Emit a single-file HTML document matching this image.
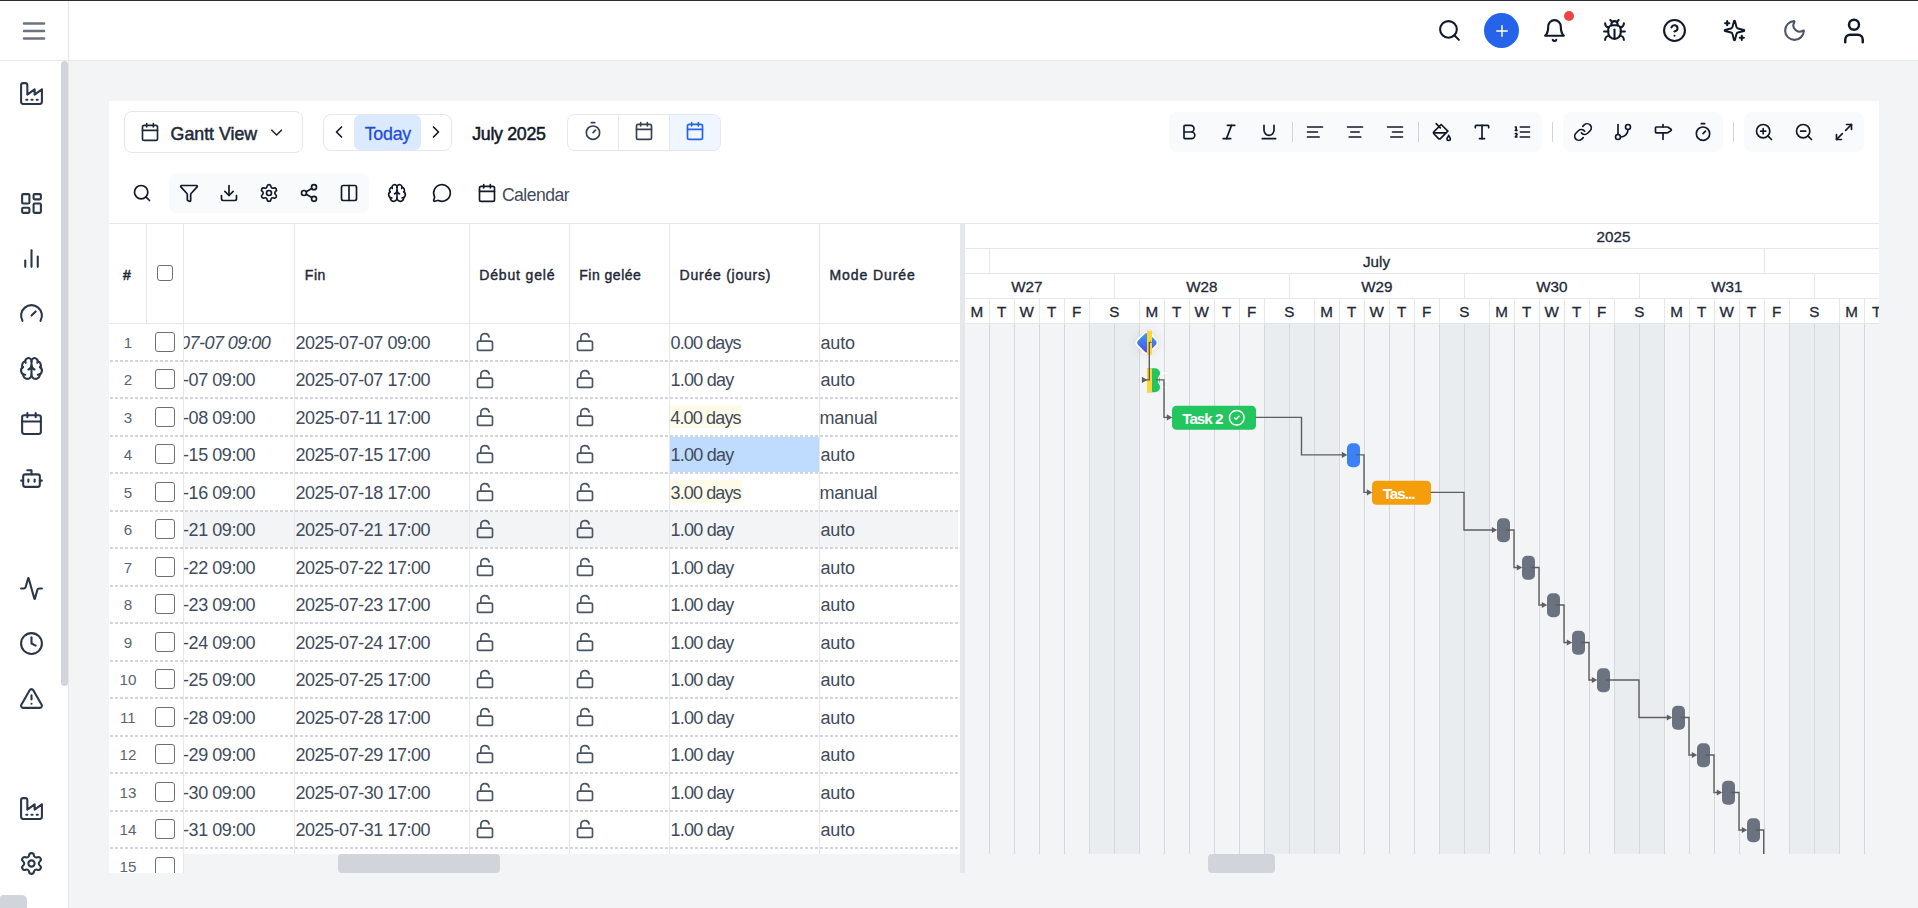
<!DOCTYPE html>
<html lang="fr"><head><meta charset="utf-8"><title>Gantt View</title>
<style>
html,body{margin:0;padding:0}
body{width:1918px;height:908px;overflow:hidden;background:#f3f4f6;position:relative;font-family:"Liberation Sans",sans-serif;}
.b{position:absolute;box-sizing:border-box}
.t{position:absolute;white-space:nowrap}
.ic{position:absolute;fill:none;stroke:currentColor;stroke-linecap:round;stroke-linejoin:round;overflow:visible}
.cb{position:absolute;box-sizing:border-box;border:1.6px solid #707070;background:#fff}
.clip{position:absolute;overflow:hidden}
</style></head><body>

<div class="b" style="left:0px;top:0px;width:1918px;height:61px;background:#fff;border-bottom:1px solid #e5e7eb"></div>
<div class="b" style="left:0px;top:0px;width:69px;height:908px;background:#fff;border-right:1px solid #e5e7eb"></div>
<div class="b" style="left:0px;top:60px;width:69px;height:1px;background:#e5e7eb"></div>
<div class="b" style="left:0px;top:0px;width:1918px;height:1px;background:#2b2f33"></div>
<div class="b" style="left:61px;top:61px;width:7px;height:625px;background:#d1d5db;border-radius:3.5px"></div>
<div class="b" style="left:0px;top:895px;width:27px;height:13px;background:#d1d5db;border-radius:3px 5px 0 0"></div>
<svg class="ic" style="left:19.00px;top:16.00px;width:30px;height:30px;color:#6b7280" viewBox="0 0 24 24" stroke-width="2" ><path d="M4 6h16"/><path d="M4 12h16"/><path d="M4 18h16"/></svg>
<svg class="ic" style="left:19.00px;top:80.80px;width:25px;height:25px;color:#2b3648" viewBox="0 0 24 24" stroke-width="2" ><path d="M2 20a2 2 0 0 0 2 2h16a2 2 0 0 0 2-2V8l-7 5V8l-7 5V4a2 2 0 0 0-2-2H4a2 2 0 0 0-2 2Z"/><path d="M17 18h1"/><path d="M12 18h1"/><path d="M7 18h1"/></svg>
<svg class="ic" style="left:19.00px;top:190.80px;width:25px;height:25px;color:#2b3648" viewBox="0 0 24 24" stroke-width="2" ><rect width="7" height="9" x="3" y="3" rx="1"/><rect width="7" height="5" x="14" y="3" rx="1"/><rect width="7" height="9" x="14" y="12" rx="1"/><rect width="7" height="5" x="3" y="16" rx="1"/></svg>
<svg class="ic" style="left:19.00px;top:245.80px;width:25px;height:25px;color:#2b3648" viewBox="0 0 24 24" stroke-width="2" ><path d="M18 20V10"/><path d="M12 20V4"/><path d="M6 20v-6"/></svg>
<svg class="ic" style="left:19.00px;top:301.10px;width:25px;height:25px;color:#2b3648" viewBox="0 0 24 24" stroke-width="2" ><path d="m12 14 4-4"/><path d="M3.34 19a10 10 0 1 1 17.32 0"/></svg>
<svg class="ic" style="left:19.00px;top:355.80px;width:25px;height:25px;color:#2b3648" viewBox="0 0 24 24" stroke-width="2" ><path d="M12 18V5"/><path d="M15 13a4.17 4.17 0 0 1-3-4 4.17 4.17 0 0 1-3 4"/><path d="M17.598 6.5A3 3 0 1 0 12 5a3 3 0 1 0-5.598 1.5"/><path d="M17.997 5.125a4 4 0 0 1 2.526 5.77"/><path d="M18 18a4 4 0 0 0 2-7.464"/><path d="M19.967 17.483A4 4 0 1 1 12 18a4 4 0 1 1-7.967-.517"/><path d="M6 18a4 4 0 0 1-2-7.464"/><path d="M6.003 5.125a4 4 0 0 0-2.526 5.77"/></svg>
<svg class="ic" style="left:19.00px;top:410.80px;width:25px;height:25px;color:#2b3648" viewBox="0 0 24 24" stroke-width="2" ><path d="M8 2v4"/><path d="M16 2v4"/><rect width="18" height="18" x="3" y="4" rx="2"/><path d="M3 10h18"/></svg>
<svg class="ic" style="left:19.00px;top:465.80px;width:25px;height:25px;color:#2b3648" viewBox="0 0 24 24" stroke-width="2" ><path d="M12 8V4H8"/><rect width="16" height="12" x="4" y="8" rx="2"/><path d="M2 14h2"/><path d="M20 14h2"/><path d="M15 13v2"/><path d="M9 13v2"/></svg>
<svg class="ic" style="left:19.00px;top:575.80px;width:25px;height:25px;color:#2b3648" viewBox="0 0 24 24" stroke-width="2" ><path d="M22 12h-2.48a2 2 0 0 0-1.93 1.46l-2.35 8.36a.25.25 0 0 1-.48 0L9.24 2.18a.25.25 0 0 0-.48 0l-2.35 8.36A2 2 0 0 1 4.49 12H2"/></svg>
<svg class="ic" style="left:19.00px;top:630.80px;width:25px;height:25px;color:#2b3648" viewBox="0 0 24 24" stroke-width="2" ><path d="M12 6v6l4 2"/><circle cx="12" cy="12" r="10"/></svg>
<svg class="ic" style="left:19.00px;top:685.80px;width:25px;height:25px;color:#2b3648" viewBox="0 0 24 24" stroke-width="2" ><path d="m21.73 18-8-14a2 2 0 0 0-3.48 0l-8 14A2 2 0 0 0 4 21h16a2 2 0 0 0 1.73-3"/><path d="M12 9v4"/><path d="M12 17h.01"/></svg>
<svg class="ic" style="left:19.00px;top:795.80px;width:25px;height:25px;color:#2b3648" viewBox="0 0 24 24" stroke-width="2" ><path d="M2 20a2 2 0 0 0 2 2h16a2 2 0 0 0 2-2V8l-7 5V8l-7 5V4a2 2 0 0 0-2-2H4a2 2 0 0 0-2 2Z"/><path d="M17 18h1"/><path d="M12 18h1"/><path d="M7 18h1"/></svg>
<svg class="ic" style="left:19.00px;top:850.80px;width:25px;height:25px;color:#2b3648" viewBox="0 0 24 24" stroke-width="2" ><path d="M9.671 4.136a2.34 2.34 0 0 1 4.659 0 2.34 2.34 0 0 0 3.319 1.915 2.34 2.34 0 0 1 2.33 4.033 2.34 2.34 0 0 0 0 3.831 2.34 2.34 0 0 1-2.33 4.033 2.34 2.34 0 0 0-3.319 1.915 2.34 2.34 0 0 1-4.659 0 2.34 2.34 0 0 0-3.32-1.915 2.34 2.34 0 0 1-2.33-4.033 2.34 2.34 0 0 0 0-3.831A2.34 2.34 0 0 1 6.35 6.051a2.34 2.34 0 0 0 3.319-1.915"/><circle cx="12" cy="12" r="3"/></svg>
<svg class="ic" style="left:1437.00px;top:17.60px;width:25px;height:25px;color:#111827" viewBox="0 0 24 24" stroke-width="2" ><path d="m21 21-4.34-4.34"/><circle cx="11" cy="11" r="8"/></svg>
<div class="b" style="left:1484px;top:13px;width:35px;height:35px;background:#2563eb;border-radius:50%"></div>
<svg class="ic" style="left:1492.50px;top:21.50px;width:18px;height:18px;color:#fff" viewBox="0 0 24 24" stroke-width="2" ><path d="M5 12h14"/><path d="M12 5v14"/></svg>
<svg class="ic" style="left:1542.00px;top:17.60px;width:25px;height:25px;color:#111827" viewBox="0 0 24 24" stroke-width="2" ><path d="M6 8a6 6 0 0 1 12 0c0 7 3 9 3 9H3s3-2 3-9"/><path d="M10.3 21a1.94 1.94 0 0 0 3.4 0"/></svg>
<div class="b" style="left:1564px;top:11px;width:10px;height:10px;background:#ef4444;border-radius:50%"></div>
<svg class="ic" style="left:1602.00px;top:17.60px;width:25px;height:25px;color:#111827" viewBox="0 0 24 24" stroke-width="2" ><path d="M12 20v-9"/><path d="M14 7a4 4 0 0 1 4 4v3a6 6 0 0 1-12 0v-3a4 4 0 0 1 4-4z"/><path d="M14.12 3.88 16 2"/><path d="M21 21a4 4 0 0 0-3.81-4"/><path d="M21 5a4 4 0 0 1-3.55 3.97"/><path d="M22 13h-4"/><path d="M3 21a4 4 0 0 1 3.81-4"/><path d="M3 5a4 4 0 0 0 3.55 3.97"/><path d="M6 13H2"/><path d="m8 2 1.88 1.88"/><path d="M9 7.13V6a3 3 0 1 1 6 0v1.13"/></svg>
<svg class="ic" style="left:1662.00px;top:17.60px;width:25px;height:25px;color:#111827" viewBox="0 0 24 24" stroke-width="2" ><circle cx="12" cy="12" r="10"/><path d="M9.09 9a3 3 0 0 1 5.83 1c0 2-3 3-3 3"/><path d="M12 17h.01"/></svg>
<svg class="ic" style="left:1722.00px;top:17.60px;width:25px;height:25px;color:#111827" viewBox="0 0 24 24" stroke-width="2" ><path d="M9.937 15.5A2 2 0 0 0 8.5 14.063l-6.135-1.582a.5.5 0 0 1 0-.962L8.5 9.936A2 2 0 0 0 9.937 8.5l1.582-6.135a.5.5 0 0 1 .963 0L14.063 8.5A2 2 0 0 0 15.5 9.937l6.135 1.581a.5.5 0 0 1 0 .964L15.5 14.063a2 2 0 0 0-1.437 1.437l-1.582 6.135a.5.5 0 0 1-.963 0z" transform="translate(0.7 0.7) scale(0.94)"/><path d="M5 3v4"/><path d="M7 5H3"/><path d="M19 17v4"/><path d="M21 19h-4"/></svg>
<svg class="ic" style="left:1782.00px;top:17.60px;width:25px;height:25px;color:#4b5563" viewBox="0 0 24 24" stroke-width="2" ><path d="M20.985 12.486a9 9 0 1 1-9.473-9.472c.405-.022.617.46.402.803a6 6 0 0 0 8.268 8.268c.344-.215.825-.004.803.401"/></svg>
<svg class="ic" style="left:1839.00px;top:15.90px;width:30px;height:30px;color:#111827" viewBox="0 0 24 24" stroke-width="2" ><path d="M19 21v-2a4 4 0 0 0-4-4H9a4 4 0 0 0-4 4v2"/><circle cx="12" cy="7" r="4"/></svg>
<div class="b" style="left:109px;top:101px;width:1770px;height:772px;background:#fff"></div>
<div class="b" style="left:124px;top:111px;width:179px;height:42px;border:1px solid #e5e7eb;border-radius:8px;background:#fff"></div>
<svg class="ic" style="left:140.00px;top:122.00px;width:20px;height:20px;color:#1f2937" viewBox="0 0 24 24" stroke-width="2" ><path d="M8 2v4"/><path d="M16 2v4"/><rect width="18" height="18" x="3" y="4" rx="2"/><path d="M3 10h18"/></svg>
<div class="t " style="left:170.60px;letter-spacing:-0.012px;top:124px;font-size:17.8px;line-height:20px;font-weight:400;color:#1f2937;-webkit-text-stroke:0.5px #1f2937;">Gantt View</div>
<svg class="ic" style="left:267.20px;top:122.80px;width:19.2px;height:19.2px;color:#1f2937" viewBox="0 0 24 24" stroke-width="2" ><path d="m6 9 6 6 6-6"/></svg>
<div class="b" style="left:323px;top:114px;width:129px;height:37px;border:1px solid #e5e7eb;border-radius:8px;background:#fff"></div>
<div class="b" style="left:354px;top:115px;width:67px;height:35px;background:#dbeafe;border-radius:6px"></div>
<svg class="ic" style="left:329.00px;top:122.20px;width:20px;height:20px;color:#111827" viewBox="0 0 24 24" stroke-width="2" ><path d="m15 18-6-6 6-6"/></svg>
<svg class="ic" style="left:426.00px;top:122.20px;width:20px;height:20px;color:#111827" viewBox="0 0 24 24" stroke-width="2" ><path d="m9 18 6-6-6-6"/></svg>
<div class="t " style="left:364.70px;letter-spacing:-0.239px;top:124px;font-size:17.8px;line-height:20px;font-weight:400;color:#1d4ed8;-webkit-text-stroke:0.3px #1d4ed8;">Today</div>
<div class="t " style="left:472.30px;letter-spacing:-0.316px;top:124px;font-size:17.8px;line-height:20px;font-weight:400;color:#111827;-webkit-text-stroke:0.5px #111827;">July 2025</div>
<div class="b" style="left:567px;top:114px;width:154px;height:37px;border:1px solid #e5e7eb;border-radius:8px;background:#fff;overflow:hidden"></div>
<div class="b" style="left:670px;top:115px;width:50px;height:35px;background:#eff6ff;border-radius:0 7px 7px 0"></div>
<div class="b" style="left:618px;top:115px;width:1px;height:35px;background:#e5e7eb"></div>
<div class="b" style="left:669px;top:115px;width:1px;height:35px;background:#e5e7eb"></div>
<svg class="ic" style="left:583.00px;top:121.40px;width:20px;height:20px;color:#374151" viewBox="0 0 24 24" stroke-width="2" ><line x1="10" x2="14" y1="2" y2="2"/><line x1="12" x2="15" y1="14" y2="11"/><circle cx="12" cy="14" r="8"/></svg>
<svg class="ic" style="left:634.00px;top:121.40px;width:20px;height:20px;color:#374151" viewBox="0 0 24 24" stroke-width="2" ><path d="M8 2v4"/><path d="M16 2v4"/><rect width="18" height="18" x="3" y="4" rx="2"/><path d="M3 10h18"/></svg>
<svg class="ic" style="left:685.00px;top:121.40px;width:20px;height:20px;color:#2563eb" viewBox="0 0 24 24" stroke-width="2" ><path d="M8 2v4"/><path d="M16 2v4"/><rect width="18" height="18" x="3" y="4" rx="2"/><path d="M3 10h18"/></svg>
<div class="b" style="left:1169px;top:112px;width:373px;height:40px;background:#f8fafc;border-radius:8px"></div>
<div class="b" style="left:1563px;top:112px;width:160px;height:40px;background:#f8fafc;border-radius:8px"></div>
<div class="b" style="left:1744px;top:112px;width:120px;height:40px;background:#f8fafc;border-radius:8px"></div>
<div class="b" style="left:1292px;top:122px;width:1px;height:20px;background:#d1d5db"></div>
<div class="b" style="left:1418px;top:122px;width:1px;height:20px;background:#d1d5db"></div>
<div class="b" style="left:1552.2px;top:122px;width:1.25px;height:20px;background:#d1d5db"></div>
<div class="b" style="left:1733.2px;top:122px;width:1.25px;height:20px;background:#d1d5db"></div>
<svg class="ic" style="left:1179.00px;top:122.00px;width:20px;height:20px;color:#111827" viewBox="0 0 24 24" stroke-width="2" ><path d="M6 12h9a4 4 0 0 1 0 8H7a1 1 0 0 1-1-1V5a1 1 0 0 1 1-1h7a4 4 0 0 1 0 8"/></svg>
<svg class="ic" style="left:1219.00px;top:122.00px;width:20px;height:20px;color:#111827" viewBox="0 0 24 24" stroke-width="2" ><line x1="19" x2="10" y1="4" y2="4"/><line x1="14" x2="5" y1="20" y2="20"/><line x1="15" x2="9" y1="4" y2="20"/></svg>
<svg class="ic" style="left:1259.00px;top:122.00px;width:20px;height:20px;color:#111827" viewBox="0 0 24 24" stroke-width="2" ><path d="M6 4v6a6 6 0 0 0 12 0V4"/><line x1="4" x2="20" y1="20" y2="20"/></svg>
<svg class="ic" style="left:1305.00px;top:122.00px;width:20px;height:20px;color:#111827" viewBox="0 0 24 24" stroke-width="2" ><path d="M21 6H3"/><path d="M15 12H3"/><path d="M17 18H3"/></svg>
<svg class="ic" style="left:1345.00px;top:122.00px;width:20px;height:20px;color:#111827" viewBox="0 0 24 24" stroke-width="2" ><path d="M21 6H3"/><path d="M17 12H7"/><path d="M19 18H5"/></svg>
<svg class="ic" style="left:1385.00px;top:122.00px;width:20px;height:20px;color:#111827" viewBox="0 0 24 24" stroke-width="2" ><path d="M21 6H3"/><path d="M21 12H9"/><path d="M21 18H7"/></svg>
<svg class="ic" style="left:1431.50px;top:122.00px;width:20px;height:20px;color:#111827" viewBox="0 0 24 24" stroke-width="2" ><path d="m19 11-8-8-8.6 8.6a2 2 0 0 0 0 2.8l5.2 5.2c.8.8 2 .8 2.8 0L19 11Z"/><path d="m5 2 5 5"/><path d="M2 13h15"/><path d="M22 20a2 2 0 1 1-4 0c0-1.6 1.7-2.4 2-4 .3 1.6 2 2.400 2 4Z"/></svg>
<svg class="ic" style="left:1472.00px;top:122.00px;width:20px;height:20px;color:#111827" viewBox="0 0 24 24" stroke-width="2" ><path d="M12 4v16"/><path d="M4 7V5a1 1 0 0 1 1-1h14a1 1 0 0 1 1 1v2"/><path d="M9 20h6"/></svg>
<svg class="ic" style="left:1512.00px;top:122.00px;width:20px;height:20px;color:#111827" viewBox="0 0 24 24" stroke-width="2" ><line x1="10" x2="21" y1="6" y2="6"/><line x1="10" x2="21" y1="12" y2="12"/><line x1="10" x2="21" y1="18" y2="18"/><path d="M4 6h1v4"/><path d="M4 10h2"/><path d="M6 18H4c0-1 2-2 2-3s-1-1.5-2-1"/></svg>
<svg class="ic" style="left:1573.00px;top:122.00px;width:20px;height:20px;color:#111827" viewBox="0 0 24 24" stroke-width="2" ><path d="M10 13a5 5 0 0 0 7.54.54l3-3a5 5 0 0 0-7.07-7.07l-1.72 1.71"/><path d="M14 11a5 5 0 0 0-7.54-.54l-3 3a5 5 0 0 0 7.07 7.07l1.71-1.71"/></svg>
<svg class="ic" style="left:1613.00px;top:122.00px;width:20px;height:20px;color:#111827" viewBox="0 0 24 24" stroke-width="2" ><line x1="6" x2="6" y1="3" y2="15"/><circle cx="18" cy="6" r="3"/><circle cx="6" cy="18" r="3"/><path d="M18 9a9 9 0 0 1-9 9"/></svg>
<svg class="ic" style="left:1653.00px;top:122.00px;width:20px;height:20px;color:#111827" viewBox="0 0 24 24" stroke-width="2" ><path d="M12 13v8"/><path d="M12 3v3"/><path d="M4 6a1 1 0 0 0-1 1v5a1 1 0 0 0 1 1h13a2 2 0 0 0 1.152-.365l3.424-2.317a1 1 0 0 0 0-1.635l-3.424-2.318A2 2 0 0 0 17 6z"/></svg>
<svg class="ic" style="left:1693.00px;top:122.00px;width:20px;height:20px;color:#111827" viewBox="0 0 24 24" stroke-width="2" ><line x1="10" x2="14" y1="2" y2="2"/><line x1="12" x2="15" y1="14" y2="11"/><circle cx="12" cy="14" r="8"/></svg>
<svg class="ic" style="left:1754.00px;top:122.00px;width:20px;height:20px;color:#111827" viewBox="0 0 24 24" stroke-width="2" ><circle cx="11" cy="11" r="8"/><line x1="21" x2="16.65" y1="21" y2="16.65"/><line x1="11" x2="11" y1="8" y2="14"/><line x1="8" x2="14" y1="11" y2="11"/></svg>
<svg class="ic" style="left:1794.00px;top:122.00px;width:20px;height:20px;color:#111827" viewBox="0 0 24 24" stroke-width="2" ><circle cx="11" cy="11" r="8"/><line x1="21" x2="16.65" y1="21" y2="16.65"/><line x1="8" x2="14" y1="11" y2="11"/></svg>
<svg class="ic" style="left:1834.00px;top:122.00px;width:20px;height:20px;color:#111827" viewBox="0 0 24 24" stroke-width="2" ><path d="M15 3h6v6"/><path d="m21 3-7 7"/><path d="m3 21 7-7"/><path d="M9 21H3v-6"/></svg>
<svg class="ic" style="left:132.00px;top:183.00px;width:20px;height:20px;color:#111827" viewBox="0 0 24 24" stroke-width="2" ><path d="m21 21-4.34-4.34"/><circle cx="11" cy="11" r="8"/></svg>
<div class="b" style="left:169px;top:173px;width:200px;height:40px;background:#f8fafc;border-radius:8px"></div>
<svg class="ic" style="left:179.00px;top:183.00px;width:20px;height:20px;color:#111827" viewBox="0 0 24 24" stroke-width="2" ><path d="M10 20a1 1 0 0 0 .553.895l2 1A1 1 0 0 0 14 21v-7a2 2 0 0 1 .517-1.341L21.74 4.67A1 1 0 0 0 21 3H3a1 1 0 0 0-.742 1.67l7.225 7.989A2 2 0 0 1 10 14z"/></svg>
<svg class="ic" style="left:219.00px;top:183.00px;width:20px;height:20px;color:#111827" viewBox="0 0 24 24" stroke-width="2" ><path d="M12 15V3"/><path d="M21 15v4a2 2 0 0 1-2 2H5a2 2 0 0 1-2-2v-4"/><path d="m7 10 5 5 5-5"/></svg>
<svg class="ic" style="left:259.00px;top:183.00px;width:20px;height:20px;color:#111827" viewBox="0 0 24 24" stroke-width="2" ><path d="M9.671 4.136a2.34 2.34 0 0 1 4.659 0 2.34 2.34 0 0 0 3.319 1.915 2.34 2.34 0 0 1 2.33 4.033 2.34 2.34 0 0 0 0 3.831 2.34 2.34 0 0 1-2.33 4.033 2.34 2.34 0 0 0-3.319 1.915 2.34 2.34 0 0 1-4.659 0 2.34 2.34 0 0 0-3.32-1.915 2.34 2.34 0 0 1-2.33-4.033 2.34 2.34 0 0 0 0-3.831A2.34 2.34 0 0 1 6.35 6.051a2.34 2.34 0 0 0 3.319-1.915"/><circle cx="12" cy="12" r="3"/></svg>
<svg class="ic" style="left:299.00px;top:183.00px;width:20px;height:20px;color:#111827" viewBox="0 0 24 24" stroke-width="2" ><circle cx="18" cy="5" r="3"/><circle cx="6" cy="12" r="3"/><circle cx="18" cy="19" r="3"/><line x1="8.59" x2="15.42" y1="13.51" y2="17.49"/><line x1="15.41" x2="8.59" y1="6.51" y2="10.49"/></svg>
<svg class="ic" style="left:339.00px;top:183.00px;width:20px;height:20px;color:#111827" viewBox="0 0 24 24" stroke-width="2" ><rect width="18" height="18" x="3" y="3" rx="2"/><path d="M12 3v18"/></svg>
<svg class="ic" style="left:387.00px;top:183.00px;width:20px;height:20px;color:#111827" viewBox="0 0 24 24" stroke-width="2" ><path d="M12 18V5"/><path d="M15 13a4.17 4.17 0 0 1-3-4 4.17 4.17 0 0 1-3 4"/><path d="M17.598 6.5A3 3 0 1 0 12 5a3 3 0 1 0-5.598 1.5"/><path d="M17.997 5.125a4 4 0 0 1 2.526 5.77"/><path d="M18 18a4 4 0 0 0 2-7.464"/><path d="M19.967 17.483A4 4 0 1 1 12 18a4 4 0 1 1-7.967-.517"/><path d="M6 18a4 4 0 0 1-2-7.464"/><path d="M6.003 5.125a4 4 0 0 0-2.526 5.77"/></svg>
<svg class="ic" style="left:431.50px;top:183.00px;width:20px;height:20px;color:#111827" viewBox="0 0 24 24" stroke-width="2" ><path d="M2.992 16.342a2 2 0 0 1 .094 1.167l-1.065 3.29a1 1 0 0 0 1.236 1.168l3.413-.998a2 2 0 0 1 1.099.092 10 10 0 1 0-4.777-4.719"/></svg>
<svg class="ic" style="left:477.00px;top:183.00px;width:20px;height:20px;color:#111827" viewBox="0 0 24 24" stroke-width="2" ><path d="M8 2v4"/><path d="M16 2v4"/><rect width="18" height="18" x="3" y="4" rx="2"/><path d="M3 10h18"/></svg>
<div class="t " style="left:501.90px;letter-spacing:-0.520px;top:185px;font-size:17.6px;line-height:20px;font-weight:400;color:#424c5c;">Calendar</div>
<div class="b" style="left:109px;top:223px;width:1770px;height:1px;background:#e5e7eb"></div>
<div class="b" style="left:109px;top:323px;width:851px;height:1px;background:#e5e7eb"></div>
<div class="b" style="left:184px;top:512px;width:774px;height:35px;background:#f3f4f6"></div>
<div class="b" style="left:670px;top:437px;width:149px;height:34.5px;background:#bfdbfe"></div>
<div class="b" style="left:670px;top:405px;width:72px;height:23px;background:#fefce8"></div>
<div class="b" style="left:670px;top:480px;width:72px;height:23px;background:#fefce8"></div>
<div class="b" style="left:146px;top:224px;width:1px;height:99px;background:#e5e7eb"></div>
<div class="b" style="left:183px;top:224px;width:1px;height:630px;background:#e5e7eb"></div>
<div class="b" style="left:294px;top:224px;width:1px;height:630px;background:#e5e7eb"></div>
<div class="b" style="left:469px;top:224px;width:1px;height:630px;background:#e5e7eb"></div>
<div class="b" style="left:569px;top:224px;width:1px;height:630px;background:#e5e7eb"></div>
<div class="b" style="left:669px;top:224px;width:1px;height:630px;background:#e5e7eb"></div>
<div class="b" style="left:819px;top:224px;width:1px;height:630px;background:#e5e7eb"></div>
<svg style="position:absolute;left:0;top:0" width="960" height="860" viewBox="0 0 960 860" fill="none" stroke="#d2d6dc" stroke-width="2" stroke-dasharray="3 2"><line x1="110" x2="958" y1="361.000" y2="361.000"/><line x1="110" x2="958" y1="398.000" y2="398.000"/><line x1="110" x2="958" y1="436.000" y2="436.000"/><line x1="110" x2="958" y1="473.000" y2="473.000"/><line x1="110" x2="958" y1="511.000" y2="511.000"/><line x1="110" x2="958" y1="548.000" y2="548.000"/><line x1="110" x2="958" y1="586.000" y2="586.000"/><line x1="110" x2="958" y1="623.000" y2="623.000"/><line x1="110" x2="958" y1="661.000" y2="661.000"/><line x1="110" x2="958" y1="698.000" y2="698.000"/><line x1="110" x2="958" y1="736.000" y2="736.000"/><line x1="110" x2="958" y1="773.000" y2="773.000"/><line x1="110" x2="958" y1="811.000" y2="811.000"/><line x1="110" x2="958" y1="848.000" y2="848.000"/></svg>
<div class="t " style="left:122.90px;letter-spacing:0.000px;top:267px;font-size:14px;line-height:16px;font-weight:400;color:#1f2937;-webkit-text-stroke:0.5px #1f2937;">#</div>
<div class="cb" style="left:156.5px;top:265px;width:16px;height:16px;border-radius:3px"></div>
<div class="t " style="left:304.80px;letter-spacing:0.569px;top:267px;font-size:14px;line-height:16px;font-weight:400;color:#1f2937;-webkit-text-stroke:0.42px #1f2937;">Fin</div>
<div class="t " style="left:479.30px;letter-spacing:0.830px;top:267px;font-size:14px;line-height:16px;font-weight:400;color:#1f2937;-webkit-text-stroke:0.42px #1f2937;">Début gelé</div>
<div class="t " style="left:579.30px;letter-spacing:0.487px;top:267px;font-size:14px;line-height:16px;font-weight:400;color:#1f2937;-webkit-text-stroke:0.42px #1f2937;">Fin gelée</div>
<div class="t " style="left:679.60px;letter-spacing:0.764px;top:267px;font-size:14px;line-height:16px;font-weight:400;color:#1f2937;-webkit-text-stroke:0.42px #1f2937;">Durée (jours)</div>
<div class="t " style="left:829.50px;letter-spacing:0.905px;top:267px;font-size:14px;line-height:16px;font-weight:400;color:#1f2937;-webkit-text-stroke:0.42px #1f2937;">Mode Durée</div>
<div class="clip" style="left:184px;top:324px;width:110px;height:530px">
<div class="t " style="left:-47.30px;letter-spacing:-0.541px;top:9px;font-size:18px;line-height:20px;font-weight:400;color:#414b5c;font-style:italic;">2025-07-07 09:00</div>
<div class="t " style="left:-63.80px;letter-spacing:-0.454px;top:46px;font-size:18px;line-height:20px;font-weight:400;color:#414b5c;">2025-07-07 09:00</div>
<div class="t " style="left:-63.80px;letter-spacing:-0.454px;top:84px;font-size:18px;line-height:20px;font-weight:400;color:#414b5c;">2025-07-08 09:00</div>
<div class="t " style="left:-63.80px;letter-spacing:-0.454px;top:121px;font-size:18px;line-height:20px;font-weight:400;color:#414b5c;">2025-07-15 09:00</div>
<div class="t " style="left:-63.80px;letter-spacing:-0.454px;top:159px;font-size:18px;line-height:20px;font-weight:400;color:#414b5c;">2025-07-16 09:00</div>
<div class="t " style="left:-63.80px;letter-spacing:-0.454px;top:196px;font-size:18px;line-height:20px;font-weight:400;color:#414b5c;">2025-07-21 09:00</div>
<div class="t " style="left:-63.80px;letter-spacing:-0.454px;top:234px;font-size:18px;line-height:20px;font-weight:400;color:#414b5c;">2025-07-22 09:00</div>
<div class="t " style="left:-63.80px;letter-spacing:-0.454px;top:271px;font-size:18px;line-height:20px;font-weight:400;color:#414b5c;">2025-07-23 09:00</div>
<div class="t " style="left:-63.80px;letter-spacing:-0.454px;top:309px;font-size:18px;line-height:20px;font-weight:400;color:#414b5c;">2025-07-24 09:00</div>
<div class="t " style="left:-63.80px;letter-spacing:-0.454px;top:346px;font-size:18px;line-height:20px;font-weight:400;color:#414b5c;">2025-07-25 09:00</div>
<div class="t " style="left:-63.80px;letter-spacing:-0.454px;top:384px;font-size:18px;line-height:20px;font-weight:400;color:#414b5c;">2025-07-28 09:00</div>
<div class="t " style="left:-63.80px;letter-spacing:-0.454px;top:421px;font-size:18px;line-height:20px;font-weight:400;color:#414b5c;">2025-07-29 09:00</div>
<div class="t " style="left:-63.80px;letter-spacing:-0.454px;top:459px;font-size:18px;line-height:20px;font-weight:400;color:#414b5c;">2025-07-30 09:00</div>
<div class="t " style="left:-63.80px;letter-spacing:-0.454px;top:496px;font-size:18px;line-height:20px;font-weight:400;color:#414b5c;">2025-07-31 09:00</div>
</div>
<div class="t " style="left:-72.1px;width:400px;text-align:center;top:334px;font-size:15.2px;line-height:17px;font-weight:400;color:#5b6472;letter-spacing:0px;">1</div>
<div class="cb" style="left:155px;top:332px;width:20px;height:20px;border-radius:3px"></div>
<div class="t " style="left:295.40px;letter-spacing:-0.461px;top:333px;font-size:18px;line-height:20px;font-weight:400;color:#414b5c;">2025-07-07 09:00</div>
<svg class="ic" style="left:475.00px;top:331.65px;width:20px;height:20px;color:#4b5563" viewBox="0 0 24 24" stroke-width="2" ><rect width="18" height="11" x="3" y="11" rx="2" ry="2"/><path d="M7 11V7a5 5 0 0 1 9.9-1"/></svg>
<svg class="ic" style="left:575.00px;top:331.65px;width:20px;height:20px;color:#4b5563" viewBox="0 0 24 24" stroke-width="2" ><rect width="18" height="11" x="3" y="11" rx="2" ry="2"/><path d="M7 11V7a5 5 0 0 1 9.9-1"/></svg>
<div class="t " style="left:670.50px;letter-spacing:-0.869px;top:333px;font-size:18px;line-height:20px;font-weight:400;color:#414b5c;">0.00 days</div>
<div class="t " style="left:820.50px;letter-spacing:-0.174px;top:333px;font-size:18px;line-height:20px;font-weight:400;color:#414b5c;">auto</div>
<div class="t " style="left:-72.1px;width:400px;text-align:center;top:371px;font-size:15.2px;line-height:17px;font-weight:400;color:#5b6472;letter-spacing:0px;">2</div>
<div class="cb" style="left:155px;top:369px;width:20px;height:20px;border-radius:3px"></div>
<div class="t " style="left:295.40px;letter-spacing:-0.461px;top:370px;font-size:18px;line-height:20px;font-weight:400;color:#414b5c;">2025-07-07 17:00</div>
<svg class="ic" style="left:475.00px;top:369.15px;width:20px;height:20px;color:#4b5563" viewBox="0 0 24 24" stroke-width="2" ><rect width="18" height="11" x="3" y="11" rx="2" ry="2"/><path d="M7 11V7a5 5 0 0 1 9.9-1"/></svg>
<svg class="ic" style="left:575.00px;top:369.15px;width:20px;height:20px;color:#4b5563" viewBox="0 0 24 24" stroke-width="2" ><rect width="18" height="11" x="3" y="11" rx="2" ry="2"/><path d="M7 11V7a5 5 0 0 1 9.9-1"/></svg>
<div class="t " style="left:670.50px;letter-spacing:-0.751px;top:370px;font-size:18px;line-height:20px;font-weight:400;color:#414b5c;">1.00 day</div>
<div class="t " style="left:820.50px;letter-spacing:-0.174px;top:370px;font-size:18px;line-height:20px;font-weight:400;color:#414b5c;">auto</div>
<div class="t " style="left:-72.1px;width:400px;text-align:center;top:409px;font-size:15.2px;line-height:17px;font-weight:400;color:#5b6472;letter-spacing:0px;">3</div>
<div class="cb" style="left:155px;top:407px;width:20px;height:20px;border-radius:3px"></div>
<div class="t " style="left:295.40px;letter-spacing:-0.371px;top:408px;font-size:18px;line-height:20px;font-weight:400;color:#414b5c;">2025-07-11 17:00</div>
<svg class="ic" style="left:475.00px;top:406.65px;width:20px;height:20px;color:#4b5563" viewBox="0 0 24 24" stroke-width="2" ><rect width="18" height="11" x="3" y="11" rx="2" ry="2"/><path d="M7 11V7a5 5 0 0 1 9.9-1"/></svg>
<svg class="ic" style="left:575.00px;top:406.65px;width:20px;height:20px;color:#4b5563" viewBox="0 0 24 24" stroke-width="2" ><rect width="18" height="11" x="3" y="11" rx="2" ry="2"/><path d="M7 11V7a5 5 0 0 1 9.9-1"/></svg>
<div class="t " style="left:670.30px;letter-spacing:-0.844px;top:408px;font-size:18px;line-height:20px;font-weight:400;color:#414b5c;">4.00 days</div>
<div class="t " style="left:819.50px;letter-spacing:-0.207px;top:408px;font-size:18px;line-height:20px;font-weight:400;color:#414b5c;">manual</div>
<div class="t " style="left:-72.1px;width:400px;text-align:center;top:446px;font-size:15.2px;line-height:17px;font-weight:400;color:#5b6472;letter-spacing:0px;">4</div>
<div class="cb" style="left:155px;top:444px;width:20px;height:20px;border-radius:3px"></div>
<div class="t " style="left:295.40px;letter-spacing:-0.461px;top:445px;font-size:18px;line-height:20px;font-weight:400;color:#414b5c;">2025-07-15 17:00</div>
<svg class="ic" style="left:475.00px;top:444.15px;width:20px;height:20px;color:#4b5563" viewBox="0 0 24 24" stroke-width="2" ><rect width="18" height="11" x="3" y="11" rx="2" ry="2"/><path d="M7 11V7a5 5 0 0 1 9.9-1"/></svg>
<svg class="ic" style="left:575.00px;top:444.15px;width:20px;height:20px;color:#4b5563" viewBox="0 0 24 24" stroke-width="2" ><rect width="18" height="11" x="3" y="11" rx="2" ry="2"/><path d="M7 11V7a5 5 0 0 1 9.9-1"/></svg>
<div class="t " style="left:670.50px;letter-spacing:-0.751px;top:445px;font-size:18px;line-height:20px;font-weight:400;color:#414b5c;">1.00 day</div>
<div class="t " style="left:820.50px;letter-spacing:-0.174px;top:445px;font-size:18px;line-height:20px;font-weight:400;color:#414b5c;">auto</div>
<div class="t " style="left:-72.1px;width:400px;text-align:center;top:484px;font-size:15.2px;line-height:17px;font-weight:400;color:#5b6472;letter-spacing:0px;">5</div>
<div class="cb" style="left:155px;top:482px;width:20px;height:20px;border-radius:3px"></div>
<div class="t " style="left:295.40px;letter-spacing:-0.461px;top:483px;font-size:18px;line-height:20px;font-weight:400;color:#414b5c;">2025-07-18 17:00</div>
<svg class="ic" style="left:475.00px;top:481.65px;width:20px;height:20px;color:#4b5563" viewBox="0 0 24 24" stroke-width="2" ><rect width="18" height="11" x="3" y="11" rx="2" ry="2"/><path d="M7 11V7a5 5 0 0 1 9.9-1"/></svg>
<svg class="ic" style="left:575.00px;top:481.65px;width:20px;height:20px;color:#4b5563" viewBox="0 0 24 24" stroke-width="2" ><rect width="18" height="11" x="3" y="11" rx="2" ry="2"/><path d="M7 11V7a5 5 0 0 1 9.9-1"/></svg>
<div class="t " style="left:670.50px;letter-spacing:-0.869px;top:483px;font-size:18px;line-height:20px;font-weight:400;color:#414b5c;">3.00 days</div>
<div class="t " style="left:819.50px;letter-spacing:-0.207px;top:483px;font-size:18px;line-height:20px;font-weight:400;color:#414b5c;">manual</div>
<div class="t " style="left:-72.1px;width:400px;text-align:center;top:521px;font-size:15.2px;line-height:17px;font-weight:400;color:#5b6472;letter-spacing:0px;">6</div>
<div class="cb" style="left:155px;top:519px;width:20px;height:20px;border-radius:3px"></div>
<div class="t " style="left:295.40px;letter-spacing:-0.461px;top:520px;font-size:18px;line-height:20px;font-weight:400;color:#414b5c;">2025-07-21 17:00</div>
<svg class="ic" style="left:475.00px;top:519.15px;width:20px;height:20px;color:#4b5563" viewBox="0 0 24 24" stroke-width="2" ><rect width="18" height="11" x="3" y="11" rx="2" ry="2"/><path d="M7 11V7a5 5 0 0 1 9.9-1"/></svg>
<svg class="ic" style="left:575.00px;top:519.15px;width:20px;height:20px;color:#4b5563" viewBox="0 0 24 24" stroke-width="2" ><rect width="18" height="11" x="3" y="11" rx="2" ry="2"/><path d="M7 11V7a5 5 0 0 1 9.9-1"/></svg>
<div class="t " style="left:670.50px;letter-spacing:-0.751px;top:520px;font-size:18px;line-height:20px;font-weight:400;color:#414b5c;">1.00 day</div>
<div class="t " style="left:820.50px;letter-spacing:-0.174px;top:520px;font-size:18px;line-height:20px;font-weight:400;color:#414b5c;">auto</div>
<div class="t " style="left:-72.1px;width:400px;text-align:center;top:559px;font-size:15.2px;line-height:17px;font-weight:400;color:#5b6472;letter-spacing:0px;">7</div>
<div class="cb" style="left:155px;top:557px;width:20px;height:20px;border-radius:3px"></div>
<div class="t " style="left:295.40px;letter-spacing:-0.461px;top:558px;font-size:18px;line-height:20px;font-weight:400;color:#414b5c;">2025-07-22 17:00</div>
<svg class="ic" style="left:475.00px;top:556.65px;width:20px;height:20px;color:#4b5563" viewBox="0 0 24 24" stroke-width="2" ><rect width="18" height="11" x="3" y="11" rx="2" ry="2"/><path d="M7 11V7a5 5 0 0 1 9.9-1"/></svg>
<svg class="ic" style="left:575.00px;top:556.65px;width:20px;height:20px;color:#4b5563" viewBox="0 0 24 24" stroke-width="2" ><rect width="18" height="11" x="3" y="11" rx="2" ry="2"/><path d="M7 11V7a5 5 0 0 1 9.9-1"/></svg>
<div class="t " style="left:670.50px;letter-spacing:-0.751px;top:558px;font-size:18px;line-height:20px;font-weight:400;color:#414b5c;">1.00 day</div>
<div class="t " style="left:820.50px;letter-spacing:-0.174px;top:558px;font-size:18px;line-height:20px;font-weight:400;color:#414b5c;">auto</div>
<div class="t " style="left:-72.1px;width:400px;text-align:center;top:596px;font-size:15.2px;line-height:17px;font-weight:400;color:#5b6472;letter-spacing:0px;">8</div>
<div class="cb" style="left:155px;top:594px;width:20px;height:20px;border-radius:3px"></div>
<div class="t " style="left:295.40px;letter-spacing:-0.461px;top:595px;font-size:18px;line-height:20px;font-weight:400;color:#414b5c;">2025-07-23 17:00</div>
<svg class="ic" style="left:475.00px;top:594.15px;width:20px;height:20px;color:#4b5563" viewBox="0 0 24 24" stroke-width="2" ><rect width="18" height="11" x="3" y="11" rx="2" ry="2"/><path d="M7 11V7a5 5 0 0 1 9.9-1"/></svg>
<svg class="ic" style="left:575.00px;top:594.15px;width:20px;height:20px;color:#4b5563" viewBox="0 0 24 24" stroke-width="2" ><rect width="18" height="11" x="3" y="11" rx="2" ry="2"/><path d="M7 11V7a5 5 0 0 1 9.9-1"/></svg>
<div class="t " style="left:670.50px;letter-spacing:-0.751px;top:595px;font-size:18px;line-height:20px;font-weight:400;color:#414b5c;">1.00 day</div>
<div class="t " style="left:820.50px;letter-spacing:-0.174px;top:595px;font-size:18px;line-height:20px;font-weight:400;color:#414b5c;">auto</div>
<div class="t " style="left:-72.1px;width:400px;text-align:center;top:634px;font-size:15.2px;line-height:17px;font-weight:400;color:#5b6472;letter-spacing:0px;">9</div>
<div class="cb" style="left:155px;top:632px;width:20px;height:20px;border-radius:3px"></div>
<div class="t " style="left:295.40px;letter-spacing:-0.461px;top:633px;font-size:18px;line-height:20px;font-weight:400;color:#414b5c;">2025-07-24 17:00</div>
<svg class="ic" style="left:475.00px;top:631.65px;width:20px;height:20px;color:#4b5563" viewBox="0 0 24 24" stroke-width="2" ><rect width="18" height="11" x="3" y="11" rx="2" ry="2"/><path d="M7 11V7a5 5 0 0 1 9.9-1"/></svg>
<svg class="ic" style="left:575.00px;top:631.65px;width:20px;height:20px;color:#4b5563" viewBox="0 0 24 24" stroke-width="2" ><rect width="18" height="11" x="3" y="11" rx="2" ry="2"/><path d="M7 11V7a5 5 0 0 1 9.9-1"/></svg>
<div class="t " style="left:670.50px;letter-spacing:-0.751px;top:633px;font-size:18px;line-height:20px;font-weight:400;color:#414b5c;">1.00 day</div>
<div class="t " style="left:820.50px;letter-spacing:-0.174px;top:633px;font-size:18px;line-height:20px;font-weight:400;color:#414b5c;">auto</div>
<div class="t " style="left:-72.1px;width:400px;text-align:center;top:671px;font-size:15.2px;line-height:17px;font-weight:400;color:#5b6472;letter-spacing:0px;">10</div>
<div class="cb" style="left:155px;top:669px;width:20px;height:20px;border-radius:3px"></div>
<div class="t " style="left:295.40px;letter-spacing:-0.461px;top:670px;font-size:18px;line-height:20px;font-weight:400;color:#414b5c;">2025-07-25 17:00</div>
<svg class="ic" style="left:475.00px;top:669.15px;width:20px;height:20px;color:#4b5563" viewBox="0 0 24 24" stroke-width="2" ><rect width="18" height="11" x="3" y="11" rx="2" ry="2"/><path d="M7 11V7a5 5 0 0 1 9.9-1"/></svg>
<svg class="ic" style="left:575.00px;top:669.15px;width:20px;height:20px;color:#4b5563" viewBox="0 0 24 24" stroke-width="2" ><rect width="18" height="11" x="3" y="11" rx="2" ry="2"/><path d="M7 11V7a5 5 0 0 1 9.9-1"/></svg>
<div class="t " style="left:670.50px;letter-spacing:-0.751px;top:670px;font-size:18px;line-height:20px;font-weight:400;color:#414b5c;">1.00 day</div>
<div class="t " style="left:820.50px;letter-spacing:-0.174px;top:670px;font-size:18px;line-height:20px;font-weight:400;color:#414b5c;">auto</div>
<div class="t " style="left:-72.1px;width:400px;text-align:center;top:709px;font-size:15.2px;line-height:17px;font-weight:400;color:#5b6472;letter-spacing:0px;">11</div>
<div class="cb" style="left:155px;top:707px;width:20px;height:20px;border-radius:3px"></div>
<div class="t " style="left:295.40px;letter-spacing:-0.461px;top:708px;font-size:18px;line-height:20px;font-weight:400;color:#414b5c;">2025-07-28 17:00</div>
<svg class="ic" style="left:475.00px;top:706.65px;width:20px;height:20px;color:#4b5563" viewBox="0 0 24 24" stroke-width="2" ><rect width="18" height="11" x="3" y="11" rx="2" ry="2"/><path d="M7 11V7a5 5 0 0 1 9.9-1"/></svg>
<svg class="ic" style="left:575.00px;top:706.65px;width:20px;height:20px;color:#4b5563" viewBox="0 0 24 24" stroke-width="2" ><rect width="18" height="11" x="3" y="11" rx="2" ry="2"/><path d="M7 11V7a5 5 0 0 1 9.9-1"/></svg>
<div class="t " style="left:670.50px;letter-spacing:-0.751px;top:708px;font-size:18px;line-height:20px;font-weight:400;color:#414b5c;">1.00 day</div>
<div class="t " style="left:820.50px;letter-spacing:-0.174px;top:708px;font-size:18px;line-height:20px;font-weight:400;color:#414b5c;">auto</div>
<div class="t " style="left:-72.1px;width:400px;text-align:center;top:746px;font-size:15.2px;line-height:17px;font-weight:400;color:#5b6472;letter-spacing:0px;">12</div>
<div class="cb" style="left:155px;top:744px;width:20px;height:20px;border-radius:3px"></div>
<div class="t " style="left:295.40px;letter-spacing:-0.461px;top:745px;font-size:18px;line-height:20px;font-weight:400;color:#414b5c;">2025-07-29 17:00</div>
<svg class="ic" style="left:475.00px;top:744.15px;width:20px;height:20px;color:#4b5563" viewBox="0 0 24 24" stroke-width="2" ><rect width="18" height="11" x="3" y="11" rx="2" ry="2"/><path d="M7 11V7a5 5 0 0 1 9.9-1"/></svg>
<svg class="ic" style="left:575.00px;top:744.15px;width:20px;height:20px;color:#4b5563" viewBox="0 0 24 24" stroke-width="2" ><rect width="18" height="11" x="3" y="11" rx="2" ry="2"/><path d="M7 11V7a5 5 0 0 1 9.9-1"/></svg>
<div class="t " style="left:670.50px;letter-spacing:-0.751px;top:745px;font-size:18px;line-height:20px;font-weight:400;color:#414b5c;">1.00 day</div>
<div class="t " style="left:820.50px;letter-spacing:-0.174px;top:745px;font-size:18px;line-height:20px;font-weight:400;color:#414b5c;">auto</div>
<div class="t " style="left:-72.1px;width:400px;text-align:center;top:784px;font-size:15.2px;line-height:17px;font-weight:400;color:#5b6472;letter-spacing:0px;">13</div>
<div class="cb" style="left:155px;top:782px;width:20px;height:20px;border-radius:3px"></div>
<div class="t " style="left:295.40px;letter-spacing:-0.461px;top:783px;font-size:18px;line-height:20px;font-weight:400;color:#414b5c;">2025-07-30 17:00</div>
<svg class="ic" style="left:475.00px;top:781.65px;width:20px;height:20px;color:#4b5563" viewBox="0 0 24 24" stroke-width="2" ><rect width="18" height="11" x="3" y="11" rx="2" ry="2"/><path d="M7 11V7a5 5 0 0 1 9.9-1"/></svg>
<svg class="ic" style="left:575.00px;top:781.65px;width:20px;height:20px;color:#4b5563" viewBox="0 0 24 24" stroke-width="2" ><rect width="18" height="11" x="3" y="11" rx="2" ry="2"/><path d="M7 11V7a5 5 0 0 1 9.9-1"/></svg>
<div class="t " style="left:670.50px;letter-spacing:-0.751px;top:783px;font-size:18px;line-height:20px;font-weight:400;color:#414b5c;">1.00 day</div>
<div class="t " style="left:820.50px;letter-spacing:-0.174px;top:783px;font-size:18px;line-height:20px;font-weight:400;color:#414b5c;">auto</div>
<div class="t " style="left:-72.1px;width:400px;text-align:center;top:821px;font-size:15.2px;line-height:17px;font-weight:400;color:#5b6472;letter-spacing:0px;">14</div>
<div class="cb" style="left:155px;top:819px;width:20px;height:20px;border-radius:3px"></div>
<div class="t " style="left:295.40px;letter-spacing:-0.461px;top:820px;font-size:18px;line-height:20px;font-weight:400;color:#414b5c;">2025-07-31 17:00</div>
<svg class="ic" style="left:475.00px;top:819.15px;width:20px;height:20px;color:#4b5563" viewBox="0 0 24 24" stroke-width="2" ><rect width="18" height="11" x="3" y="11" rx="2" ry="2"/><path d="M7 11V7a5 5 0 0 1 9.9-1"/></svg>
<svg class="ic" style="left:575.00px;top:819.15px;width:20px;height:20px;color:#4b5563" viewBox="0 0 24 24" stroke-width="2" ><rect width="18" height="11" x="3" y="11" rx="2" ry="2"/><path d="M7 11V7a5 5 0 0 1 9.9-1"/></svg>
<div class="t " style="left:670.50px;letter-spacing:-0.751px;top:820px;font-size:18px;line-height:20px;font-weight:400;color:#414b5c;">1.00 day</div>
<div class="t " style="left:820.50px;letter-spacing:-0.174px;top:820px;font-size:18px;line-height:20px;font-weight:400;color:#414b5c;">auto</div>
<div class="clip" style="left:109px;top:850px;width:40px;height:23px"><div class="t " style="left:-181.1px;width:400px;text-align:center;top:8px;font-size:15.2px;line-height:17px;font-weight:400;color:#5b6472;letter-spacing:0px;">15</div></div>
<div class="clip" style="left:150px;top:850px;width:30px;height:23px"><div class="cb" style="left:5px;top:7.00px;width:20px;height:20px;border-radius:3px"></div></div>
<div class="b" style="left:184px;top:854px;width:776px;height:19px;background:#f3f4f6"></div>
<div class="b" style="left:183px;top:854px;width:1px;height:19px;background:#e5e7eb"></div>
<div class="b" style="left:338px;top:854px;width:162px;height:19px;background:#d1d5db;border-radius:4px"></div>
<div class="b" style="left:960px;top:224px;width:5px;height:649px;background:#e5e7eb"></div>
<div class="b" style="left:965px;top:324px;width:914px;height:549px;background:#f3f4f6"></div>
<div class="b" style="left:1090px;top:324px;width:50px;height:530px;background:#e9edf0"></div>
<div class="b" style="left:1265px;top:324px;width:75px;height:530px;background:#e9edf0"></div>
<div class="b" style="left:1440px;top:324px;width:50px;height:530px;background:#e9edf0"></div>
<div class="b" style="left:1615px;top:324px;width:50px;height:530px;background:#e9edf0"></div>
<div class="b" style="left:1790px;top:324px;width:50px;height:530px;background:#e9edf0"></div>
<div class="b" style="left:989px;top:324px;width:1px;height:530px;background:#d5d8de"></div>
<div class="b" style="left:1014px;top:324px;width:1px;height:530px;background:#d5d8de"></div>
<div class="b" style="left:1039px;top:324px;width:1px;height:530px;background:#d5d8de"></div>
<div class="b" style="left:1064px;top:324px;width:1px;height:530px;background:#d5d8de"></div>
<div class="b" style="left:1089px;top:324px;width:1px;height:530px;background:#d5d8de"></div>
<div class="b" style="left:1114px;top:324px;width:1px;height:530px;background:#d5d8de"></div>
<div class="b" style="left:1139px;top:324px;width:1px;height:530px;background:#d5d8de"></div>
<div class="b" style="left:1164px;top:324px;width:1px;height:530px;background:#d5d8de"></div>
<div class="b" style="left:1189px;top:324px;width:1px;height:530px;background:#d5d8de"></div>
<div class="b" style="left:1214px;top:324px;width:1px;height:530px;background:#d5d8de"></div>
<div class="b" style="left:1239px;top:324px;width:1px;height:530px;background:#d5d8de"></div>
<div class="b" style="left:1264px;top:324px;width:1px;height:530px;background:#d5d8de"></div>
<div class="b" style="left:1289px;top:324px;width:1px;height:530px;background:#d5d8de"></div>
<div class="b" style="left:1314px;top:324px;width:1px;height:530px;background:#d5d8de"></div>
<div class="b" style="left:1339px;top:324px;width:1px;height:530px;background:#d5d8de"></div>
<div class="b" style="left:1364px;top:324px;width:1px;height:530px;background:#d5d8de"></div>
<div class="b" style="left:1389px;top:324px;width:1px;height:530px;background:#d5d8de"></div>
<div class="b" style="left:1414px;top:324px;width:1px;height:530px;background:#d5d8de"></div>
<div class="b" style="left:1439px;top:324px;width:1px;height:530px;background:#d5d8de"></div>
<div class="b" style="left:1464px;top:324px;width:1px;height:530px;background:#d5d8de"></div>
<div class="b" style="left:1489px;top:324px;width:1px;height:530px;background:#d5d8de"></div>
<div class="b" style="left:1514px;top:324px;width:1px;height:530px;background:#d5d8de"></div>
<div class="b" style="left:1539px;top:324px;width:1px;height:530px;background:#d5d8de"></div>
<div class="b" style="left:1564px;top:324px;width:1px;height:530px;background:#d5d8de"></div>
<div class="b" style="left:1589px;top:324px;width:1px;height:530px;background:#d5d8de"></div>
<div class="b" style="left:1614px;top:324px;width:1px;height:530px;background:#d5d8de"></div>
<div class="b" style="left:1639px;top:324px;width:1px;height:530px;background:#d5d8de"></div>
<div class="b" style="left:1664px;top:324px;width:1px;height:530px;background:#d5d8de"></div>
<div class="b" style="left:1689px;top:324px;width:1px;height:530px;background:#d5d8de"></div>
<div class="b" style="left:1714px;top:324px;width:1px;height:530px;background:#d5d8de"></div>
<div class="b" style="left:1739px;top:324px;width:1px;height:530px;background:#d5d8de"></div>
<div class="b" style="left:1764px;top:324px;width:1px;height:530px;background:#d5d8de"></div>
<div class="b" style="left:1789px;top:324px;width:1px;height:530px;background:#d5d8de"></div>
<div class="b" style="left:1814px;top:324px;width:1px;height:530px;background:#d5d8de"></div>
<div class="b" style="left:1839px;top:324px;width:1px;height:530px;background:#d5d8de"></div>
<div class="b" style="left:1864px;top:324px;width:1px;height:530px;background:#d5d8de"></div>
<div class="b" style="left:965px;top:248px;width:914px;height:1px;background:#e5e7eb"></div>
<div class="b" style="left:965px;top:273px;width:914px;height:1px;background:#e5e7eb"></div>
<div class="b" style="left:965px;top:298px;width:914px;height:1px;background:#e5e7eb"></div>
<div class="b" style="left:965px;top:323px;width:914px;height:1px;background:#e5e7eb"></div>
<div class="b" style="left:989px;top:249px;width:1px;height:24px;background:#e5e7eb"></div>
<div class="b" style="left:1764px;top:249px;width:1px;height:24px;background:#e5e7eb"></div>
<div class="b" style="left:1114px;top:274px;width:1px;height:24px;background:#e5e7eb"></div>
<div class="b" style="left:1289px;top:274px;width:1px;height:24px;background:#e5e7eb"></div>
<div class="b" style="left:1464px;top:274px;width:1px;height:24px;background:#e5e7eb"></div>
<div class="b" style="left:1639px;top:274px;width:1px;height:24px;background:#e5e7eb"></div>
<div class="b" style="left:1814px;top:274px;width:1px;height:24px;background:#e5e7eb"></div>
<div class="b" style="left:989px;top:299px;width:1px;height:24px;background:#e5e7eb"></div>
<div class="b" style="left:1014px;top:299px;width:1px;height:24px;background:#e5e7eb"></div>
<div class="b" style="left:1039px;top:299px;width:1px;height:24px;background:#e5e7eb"></div>
<div class="b" style="left:1064px;top:299px;width:1px;height:24px;background:#e5e7eb"></div>
<div class="b" style="left:1089px;top:299px;width:1px;height:24px;background:#e5e7eb"></div>
<div class="b" style="left:1139px;top:299px;width:1px;height:24px;background:#e5e7eb"></div>
<div class="b" style="left:1164px;top:299px;width:1px;height:24px;background:#e5e7eb"></div>
<div class="b" style="left:1189px;top:299px;width:1px;height:24px;background:#e5e7eb"></div>
<div class="b" style="left:1214px;top:299px;width:1px;height:24px;background:#e5e7eb"></div>
<div class="b" style="left:1239px;top:299px;width:1px;height:24px;background:#e5e7eb"></div>
<div class="b" style="left:1264px;top:299px;width:1px;height:24px;background:#e5e7eb"></div>
<div class="b" style="left:1314px;top:299px;width:1px;height:24px;background:#e5e7eb"></div>
<div class="b" style="left:1339px;top:299px;width:1px;height:24px;background:#e5e7eb"></div>
<div class="b" style="left:1364px;top:299px;width:1px;height:24px;background:#e5e7eb"></div>
<div class="b" style="left:1389px;top:299px;width:1px;height:24px;background:#e5e7eb"></div>
<div class="b" style="left:1414px;top:299px;width:1px;height:24px;background:#e5e7eb"></div>
<div class="b" style="left:1439px;top:299px;width:1px;height:24px;background:#e5e7eb"></div>
<div class="b" style="left:1489px;top:299px;width:1px;height:24px;background:#e5e7eb"></div>
<div class="b" style="left:1514px;top:299px;width:1px;height:24px;background:#e5e7eb"></div>
<div class="b" style="left:1539px;top:299px;width:1px;height:24px;background:#e5e7eb"></div>
<div class="b" style="left:1564px;top:299px;width:1px;height:24px;background:#e5e7eb"></div>
<div class="b" style="left:1589px;top:299px;width:1px;height:24px;background:#e5e7eb"></div>
<div class="b" style="left:1614px;top:299px;width:1px;height:24px;background:#e5e7eb"></div>
<div class="b" style="left:1664px;top:299px;width:1px;height:24px;background:#e5e7eb"></div>
<div class="b" style="left:1689px;top:299px;width:1px;height:24px;background:#e5e7eb"></div>
<div class="b" style="left:1714px;top:299px;width:1px;height:24px;background:#e5e7eb"></div>
<div class="b" style="left:1739px;top:299px;width:1px;height:24px;background:#e5e7eb"></div>
<div class="b" style="left:1764px;top:299px;width:1px;height:24px;background:#e5e7eb"></div>
<div class="b" style="left:1789px;top:299px;width:1px;height:24px;background:#e5e7eb"></div>
<div class="b" style="left:1839px;top:299px;width:1px;height:24px;background:#e5e7eb"></div>
<div class="b" style="left:1864px;top:299px;width:1px;height:24px;background:#e5e7eb"></div>
<div class="t " style="left:1413.5px;width:400px;text-align:center;top:228px;font-size:15.2px;line-height:17px;font-weight:400;color:#1f2937;letter-spacing:0px;-webkit-text-stroke:0.3px #1f2937;">2025</div>
<div class="t " style="left:1176.5px;width:400px;text-align:center;top:253px;font-size:15.2px;line-height:17px;font-weight:400;color:#1f2937;letter-spacing:0px;-webkit-text-stroke:0.3px #1f2937;">July</div>
<div class="t " style="left:826.8px;width:400px;text-align:center;top:278px;font-size:15.2px;line-height:17px;font-weight:400;color:#1f2937;letter-spacing:0px;-webkit-text-stroke:0.3px #1f2937;">W27</div>
<div class="t " style="left:1001.8px;width:400px;text-align:center;top:278px;font-size:15.2px;line-height:17px;font-weight:400;color:#1f2937;letter-spacing:0px;-webkit-text-stroke:0.3px #1f2937;">W28</div>
<div class="t " style="left:1176.8px;width:400px;text-align:center;top:278px;font-size:15.2px;line-height:17px;font-weight:400;color:#1f2937;letter-spacing:0px;-webkit-text-stroke:0.3px #1f2937;">W29</div>
<div class="t " style="left:1351.8px;width:400px;text-align:center;top:278px;font-size:15.2px;line-height:17px;font-weight:400;color:#1f2937;letter-spacing:0px;-webkit-text-stroke:0.3px #1f2937;">W30</div>
<div class="t " style="left:1526.8px;width:400px;text-align:center;top:278px;font-size:15.2px;line-height:17px;font-weight:400;color:#1f2937;letter-spacing:0px;-webkit-text-stroke:0.3px #1f2937;">W31</div>
<div class="clip" style="left:965px;top:299px;width:914px;height:24px">
<div class="t " style="left:-188.3px;width:400px;text-align:center;top:4px;font-size:15.2px;line-height:17px;font-weight:400;color:#1f2937;letter-spacing:0px;-webkit-text-stroke:0.3px #1f2937;">M</div>
<div class="t " style="left:-163.3px;width:400px;text-align:center;top:4px;font-size:15.2px;line-height:17px;font-weight:400;color:#1f2937;letter-spacing:0px;-webkit-text-stroke:0.3px #1f2937;">T</div>
<div class="t " style="left:-138.3px;width:400px;text-align:center;top:4px;font-size:15.2px;line-height:17px;font-weight:400;color:#1f2937;letter-spacing:0px;-webkit-text-stroke:0.3px #1f2937;">W</div>
<div class="t " style="left:-113.3px;width:400px;text-align:center;top:4px;font-size:15.2px;line-height:17px;font-weight:400;color:#1f2937;letter-spacing:0px;-webkit-text-stroke:0.3px #1f2937;">T</div>
<div class="t " style="left:-88.3px;width:400px;text-align:center;top:4px;font-size:15.2px;line-height:17px;font-weight:400;color:#1f2937;letter-spacing:0px;-webkit-text-stroke:0.3px #1f2937;">F</div>
<div class="t " style="left:-50.69999999999999px;width:400px;text-align:center;top:4px;font-size:15.2px;line-height:17px;font-weight:400;color:#1f2937;letter-spacing:0px;-webkit-text-stroke:0.3px #1f2937;">S</div>
<div class="t " style="left:-13.300000000000011px;width:400px;text-align:center;top:4px;font-size:15.2px;line-height:17px;font-weight:400;color:#1f2937;letter-spacing:0px;-webkit-text-stroke:0.3px #1f2937;">M</div>
<div class="t " style="left:11.699999999999989px;width:400px;text-align:center;top:4px;font-size:15.2px;line-height:17px;font-weight:400;color:#1f2937;letter-spacing:0px;-webkit-text-stroke:0.3px #1f2937;">T</div>
<div class="t " style="left:36.69999999999999px;width:400px;text-align:center;top:4px;font-size:15.2px;line-height:17px;font-weight:400;color:#1f2937;letter-spacing:0px;-webkit-text-stroke:0.3px #1f2937;">W</div>
<div class="t " style="left:61.69999999999999px;width:400px;text-align:center;top:4px;font-size:15.2px;line-height:17px;font-weight:400;color:#1f2937;letter-spacing:0px;-webkit-text-stroke:0.3px #1f2937;">T</div>
<div class="t " style="left:86.69999999999999px;width:400px;text-align:center;top:4px;font-size:15.2px;line-height:17px;font-weight:400;color:#1f2937;letter-spacing:0px;-webkit-text-stroke:0.3px #1f2937;">F</div>
<div class="t " style="left:124.30000000000001px;width:400px;text-align:center;top:4px;font-size:15.2px;line-height:17px;font-weight:400;color:#1f2937;letter-spacing:0px;-webkit-text-stroke:0.3px #1f2937;">S</div>
<div class="t " style="left:161.7px;width:400px;text-align:center;top:4px;font-size:15.2px;line-height:17px;font-weight:400;color:#1f2937;letter-spacing:0px;-webkit-text-stroke:0.3px #1f2937;">M</div>
<div class="t " style="left:186.7px;width:400px;text-align:center;top:4px;font-size:15.2px;line-height:17px;font-weight:400;color:#1f2937;letter-spacing:0px;-webkit-text-stroke:0.3px #1f2937;">T</div>
<div class="t " style="left:211.7px;width:400px;text-align:center;top:4px;font-size:15.2px;line-height:17px;font-weight:400;color:#1f2937;letter-spacing:0px;-webkit-text-stroke:0.3px #1f2937;">W</div>
<div class="t " style="left:236.7px;width:400px;text-align:center;top:4px;font-size:15.2px;line-height:17px;font-weight:400;color:#1f2937;letter-spacing:0px;-webkit-text-stroke:0.3px #1f2937;">T</div>
<div class="t " style="left:261.7px;width:400px;text-align:center;top:4px;font-size:15.2px;line-height:17px;font-weight:400;color:#1f2937;letter-spacing:0px;-webkit-text-stroke:0.3px #1f2937;">F</div>
<div class="t " style="left:299.3px;width:400px;text-align:center;top:4px;font-size:15.2px;line-height:17px;font-weight:400;color:#1f2937;letter-spacing:0px;-webkit-text-stroke:0.3px #1f2937;">S</div>
<div class="t " style="left:336.70000000000005px;width:400px;text-align:center;top:4px;font-size:15.2px;line-height:17px;font-weight:400;color:#1f2937;letter-spacing:0px;-webkit-text-stroke:0.3px #1f2937;">M</div>
<div class="t " style="left:361.70000000000005px;width:400px;text-align:center;top:4px;font-size:15.2px;line-height:17px;font-weight:400;color:#1f2937;letter-spacing:0px;-webkit-text-stroke:0.3px #1f2937;">T</div>
<div class="t " style="left:386.70000000000005px;width:400px;text-align:center;top:4px;font-size:15.2px;line-height:17px;font-weight:400;color:#1f2937;letter-spacing:0px;-webkit-text-stroke:0.3px #1f2937;">W</div>
<div class="t " style="left:411.70000000000005px;width:400px;text-align:center;top:4px;font-size:15.2px;line-height:17px;font-weight:400;color:#1f2937;letter-spacing:0px;-webkit-text-stroke:0.3px #1f2937;">T</div>
<div class="t " style="left:436.70000000000005px;width:400px;text-align:center;top:4px;font-size:15.2px;line-height:17px;font-weight:400;color:#1f2937;letter-spacing:0px;-webkit-text-stroke:0.3px #1f2937;">F</div>
<div class="t " style="left:474.29999999999995px;width:400px;text-align:center;top:4px;font-size:15.2px;line-height:17px;font-weight:400;color:#1f2937;letter-spacing:0px;-webkit-text-stroke:0.3px #1f2937;">S</div>
<div class="t " style="left:511.70000000000005px;width:400px;text-align:center;top:4px;font-size:15.2px;line-height:17px;font-weight:400;color:#1f2937;letter-spacing:0px;-webkit-text-stroke:0.3px #1f2937;">M</div>
<div class="t " style="left:536.7px;width:400px;text-align:center;top:4px;font-size:15.2px;line-height:17px;font-weight:400;color:#1f2937;letter-spacing:0px;-webkit-text-stroke:0.3px #1f2937;">T</div>
<div class="t " style="left:561.7px;width:400px;text-align:center;top:4px;font-size:15.2px;line-height:17px;font-weight:400;color:#1f2937;letter-spacing:0px;-webkit-text-stroke:0.3px #1f2937;">W</div>
<div class="t " style="left:586.7px;width:400px;text-align:center;top:4px;font-size:15.2px;line-height:17px;font-weight:400;color:#1f2937;letter-spacing:0px;-webkit-text-stroke:0.3px #1f2937;">T</div>
<div class="t " style="left:611.7px;width:400px;text-align:center;top:4px;font-size:15.2px;line-height:17px;font-weight:400;color:#1f2937;letter-spacing:0px;-webkit-text-stroke:0.3px #1f2937;">F</div>
<div class="t " style="left:649.3px;width:400px;text-align:center;top:4px;font-size:15.2px;line-height:17px;font-weight:400;color:#1f2937;letter-spacing:0px;-webkit-text-stroke:0.3px #1f2937;">S</div>
<div class="t " style="left:686.7px;width:400px;text-align:center;top:4px;font-size:15.2px;line-height:17px;font-weight:400;color:#1f2937;letter-spacing:0px;-webkit-text-stroke:0.3px #1f2937;">M</div>
<div class="t " style="left:711.7px;width:400px;text-align:center;top:4px;font-size:15.2px;line-height:17px;font-weight:400;color:#1f2937;letter-spacing:0px;-webkit-text-stroke:0.3px #1f2937;">T</div>
<div class="t " style="left:736.7px;width:400px;text-align:center;top:4px;font-size:15.2px;line-height:17px;font-weight:400;color:#1f2937;letter-spacing:0px;-webkit-text-stroke:0.3px #1f2937;">W</div>
<div class="t " style="left:761.7px;width:400px;text-align:center;top:4px;font-size:15.2px;line-height:17px;font-weight:400;color:#1f2937;letter-spacing:0px;-webkit-text-stroke:0.3px #1f2937;">T</div>
<div class="t " style="left:786.7px;width:400px;text-align:center;top:4px;font-size:15.2px;line-height:17px;font-weight:400;color:#1f2937;letter-spacing:0px;-webkit-text-stroke:0.3px #1f2937;">F</div>
<div class="t " style="left:824.3px;width:400px;text-align:center;top:4px;font-size:15.2px;line-height:17px;font-weight:400;color:#1f2937;letter-spacing:0px;-webkit-text-stroke:0.3px #1f2937;">S</div>
</div>
<div class="b" style="left:1208px;top:854px;width:67px;height:19px;background:#d1d5db;border-radius:4px"></div>
<svg style="position:absolute;left:0;top:0" width="1918" height="854" viewBox="0 0 1918 854"><path d="M1147,368.25 H1155 a5,5 0 0 1 5,5 V387.25 a5,5 0 0 1 -5,5 H1147 Z" fill="#22c55e"/><clipPath id="c2"><rect x="1150" y="368.25" width="17" height="24"/></clipPath><g clip-path="url(#c2)" fill="none" stroke="#fff" stroke-width="1.46" stroke-linecap="round" stroke-linejoin="round"><circle cx="1165.7" cy="380.25" r="7.3"/><path d="M1163.5,380.25 l1.46,1.46 l2.92,-2.92"/></g><rect x="1172" y="405.75" width="84" height="24" rx="4.5" fill="#22c55e"/><rect x="1347" y="443.25" width="13" height="24" rx="5" fill="#3b82f6"/><rect x="1372" y="480.75" width="59" height="24" rx="4.5" fill="#f59e0b"/><rect x="1497" y="518.25" width="13" height="24" rx="5" fill="#6b7280"/><rect x="1522" y="555.75" width="13" height="24" rx="5" fill="#6b7280"/><rect x="1547" y="593.25" width="13" height="24" rx="5" fill="#6b7280"/><rect x="1572" y="630.75" width="13" height="24" rx="5" fill="#6b7280"/><rect x="1597" y="668.25" width="13" height="24" rx="5" fill="#6b7280"/><rect x="1672" y="705.75" width="13" height="24" rx="5" fill="#6b7280"/><rect x="1697" y="743.25" width="13" height="24" rx="5" fill="#6b7280"/><rect x="1722" y="780.75" width="13" height="24" rx="5" fill="#6b7280"/><rect x="1747" y="818.25" width="13" height="24" rx="5" fill="#6b7280"/><defs><linearGradient id="mg" x1="0" y1="0" x2="1" y2="1"><stop offset="0" stop-color="#35a6f7"/><stop offset="1" stop-color="#4f46e5"/></linearGradient><filter id="ms" x="-100%" y="-100%" width="300%" height="300%"><feGaussianBlur stdDeviation="5"/></filter></defs><rect x="1136.9" y="332.75" width="20" height="20" rx="4" transform="rotate(45 1146.9 342.75)" fill="#64748b" opacity="0.16" filter="url(#ms)"/><rect x="1137.3000000000002" y="333.15" width="19.2" height="19.2" rx="5" transform="rotate(45 1146.9 342.75)" fill="#fff"/><rect x="1139.1000000000001" y="334.95" width="15.6" height="15.6" rx="3.6" transform="rotate(45 1146.9 342.75)" fill="url(#mg)"/><rect x="1147" y="330.75" width="5" height="24" fill="#fcd734"/><rect x="1147" y="368.25" width="5" height="24" fill="#fcd734"/><polyline points="1151.5,342.4 1149.3,342.4 1149.3,379.9 1146,379.9" fill="none" stroke="#5e5e5e" stroke-width="1.4"/><polygon points="1141.9,376.8 1141.9,383.1 1147.4,379.9" fill="#5e5e5e"/><polyline points="1155.7,379.9 1164.0,379.9 1164.0,417.4 1168.0,417.4" fill="none" stroke="#5e5e5e" stroke-width="1.4"/><polygon points="1166.8,414.3 1166.8,420.6 1172.3,417.4" fill="#5e5e5e"/><polyline points="1255.7,417.4 1301.5,417.4 1301.5,454.9 1343.0,454.9" fill="none" stroke="#5e5e5e" stroke-width="1.4"/><polygon points="1341.8,451.8 1341.8,458.1 1347.3,454.9" fill="#5e5e5e"/><polyline points="1355.7,454.9 1364.0,454.9 1364.0,492.4 1368.0,492.4" fill="none" stroke="#5e5e5e" stroke-width="1.4"/><polygon points="1366.8,489.3 1366.8,495.6 1372.3,492.4" fill="#5e5e5e"/><polyline points="1430.7,492.4 1464.0,492.4 1464.0,530.0 1493.0,530.0" fill="none" stroke="#5e5e5e" stroke-width="1.4"/><polygon points="1491.8,526.9 1491.8,533.1 1497.3,530.0" fill="#5e5e5e"/><polyline points="1505.7,530.0 1514.0,530.0 1514.0,567.5 1518.0,567.5" fill="none" stroke="#5e5e5e" stroke-width="1.4"/><polygon points="1516.8,564.4 1516.8,570.6 1522.3,567.5" fill="#5e5e5e"/><polyline points="1530.7,567.5 1539.0,567.5 1539.0,605.0 1543.0,605.0" fill="none" stroke="#5e5e5e" stroke-width="1.4"/><polygon points="1541.8,601.9 1541.8,608.1 1547.3,605.0" fill="#5e5e5e"/><polyline points="1555.7,605.0 1564.0,605.0 1564.0,642.5 1568.0,642.5" fill="none" stroke="#5e5e5e" stroke-width="1.4"/><polygon points="1566.8,639.4 1566.8,645.6 1572.3,642.5" fill="#5e5e5e"/><polyline points="1580.7,642.5 1589.0,642.5 1589.0,680.0 1593.0,680.0" fill="none" stroke="#5e5e5e" stroke-width="1.4"/><polygon points="1591.8,676.9 1591.8,683.1 1597.3,680.0" fill="#5e5e5e"/><polyline points="1605.7,680.0 1639.0,680.0 1639.0,717.5 1668.0,717.5" fill="none" stroke="#5e5e5e" stroke-width="1.4"/><polygon points="1666.8,714.4 1666.8,720.6 1672.3,717.5" fill="#5e5e5e"/><polyline points="1680.7,717.5 1689.0,717.5 1689.0,755.0 1693.0,755.0" fill="none" stroke="#5e5e5e" stroke-width="1.4"/><polygon points="1691.8,751.9 1691.8,758.1 1697.3,755.0" fill="#5e5e5e"/><polyline points="1705.7,755.0 1714.0,755.0 1714.0,792.5 1718.0,792.5" fill="none" stroke="#5e5e5e" stroke-width="1.4"/><polygon points="1716.8,789.4 1716.8,795.6 1722.3,792.5" fill="#5e5e5e"/><polyline points="1730.7,792.5 1739.0,792.5 1739.0,830.0 1743.0,830.0" fill="none" stroke="#5e5e5e" stroke-width="1.4"/><polygon points="1741.8,826.9 1741.8,833.1 1747.3,830.0" fill="#5e5e5e"/><polyline points="1755.7,830.0 1763.7,830.0 1763.7,854" fill="none" stroke="#5e5e5e" stroke-width="1.4"/></svg>
<div class="t " style="left:1182.20px;letter-spacing:-1.016px;top:410px;font-size:15.3px;line-height:17px;font-weight:700;color:#fff;">Task 2</div>
<svg class="ic" style="left:1228.05px;top:409.00px;width:17.5px;height:17.5px;color:#fff" viewBox="0 0 24 24" stroke-width="2" ><circle cx="12" cy="12" r="10"/><path d="m9 12 2 2 4-4"/></svg>
<div class="t " style="left:1382.70px;letter-spacing:-1.025px;top:485px;font-size:15.3px;line-height:17px;font-weight:700;color:#fff;">Tas...</div>
</body></html>
